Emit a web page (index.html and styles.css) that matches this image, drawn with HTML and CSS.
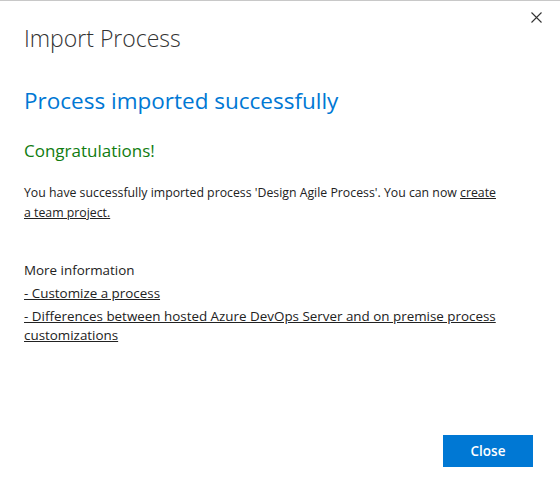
FILE: index.html
```html
<!DOCTYPE html>
<html lang="en">
<head>
<meta charset="utf-8">
<title>Import Process</title>
<link rel="stylesheet" href="styles.css">
</head>
<body>
<div class="dialog">
  <div class="header">
    <h1 class="title">Import Process</h1>
    <button class="close-x" aria-label="Close">
      <svg width="11" height="11" viewBox="0 0 11 11"><path d="M0.5 0.5 L10.5 10.5 M10.5 0.5 L0.5 10.5" stroke="#333" stroke-width="1.1" fill="none"/></svg>
    </button>
  </div>
  <div class="body">
    <h2 class="success">Process imported successfully</h2>
    <h3 class="congrats">Congratulations!</h3>
    <p class="message">You have successfully imported process 'Design Agile Process'. You can now <a href="#" class="link">create a team project.</a></p>
    <div class="more">
      <div class="more-label">More information</div>
      <a href="#" class="link more-link">- Customize a process</a>
      <a href="#" class="link more-link">- Differences between hosted Azure DevOps Server and on premise process customizations</a>
    </div>
  </div>
  <div class="footer">
    <button class="btn-primary">Close</button>
  </div>
</div>
</body>
</html>
```
FILE: styles.css
```css
html, body {
  margin: 0;
  padding: 0;
  background: #fff;
}
body {
  font-family: "Open Sans", "Noto Sans", sans-serif;
  color: #222;
}
.dialog {
  width: 560px;
  height: 496px;
  box-sizing: border-box;
  border-top: 1px solid #c8c8c8;
  display: flex;
  flex-direction: column;
}
.header {
  display: flex;
  justify-content: space-between;
  align-items: flex-start;
  padding: 0 18px 0 24px;
}
.title {
  margin: 22px 0 0;
  font-weight: 300;
  font-size: 23px;
  line-height: 30px;
  color: #333;
}
.close-x {
  border: 0;
  background: transparent;
  padding: 0;
  margin-top: 11px;
  width: 11px;
  height: 11px;
  display: flex;
}
.body {
  flex: 1;
  padding: 0 24px;
}
.success {
  margin: 33px 0 0;
  font-weight: 400;
  font-size: 22.5px;
  line-height: 30px;
  color: #0078d4;
}
.congrats {
  margin: 23px 0 0;
  font-weight: 400;
  font-size: 17px;
  line-height: 24px;
  color: #107c10;
}
.message {
  margin: 20px 0 0;
  font-size: 12.3px;
  line-height: 20px;
  color: #222;
  max-width: 480px;
}
.link {
  color: #222;
  text-decoration: underline;
}
.more {
  margin-top: 38px;
  display: flex;
  flex-direction: column;
  gap: 4px;
  font-size: 13.4px;
  line-height: 19px;
}
.footer {
  display: flex;
  justify-content: flex-end;
  padding: 0 27px 29px 24px;
}
.btn-primary {
  width: 90px;
  height: 32px;
  border: 0;
  background: #0078d4;
  color: #fff;
  font-family: "Open Sans", "Noto Sans", sans-serif;
  font-weight: 600;
  font-size: 13.5px;
}
```
